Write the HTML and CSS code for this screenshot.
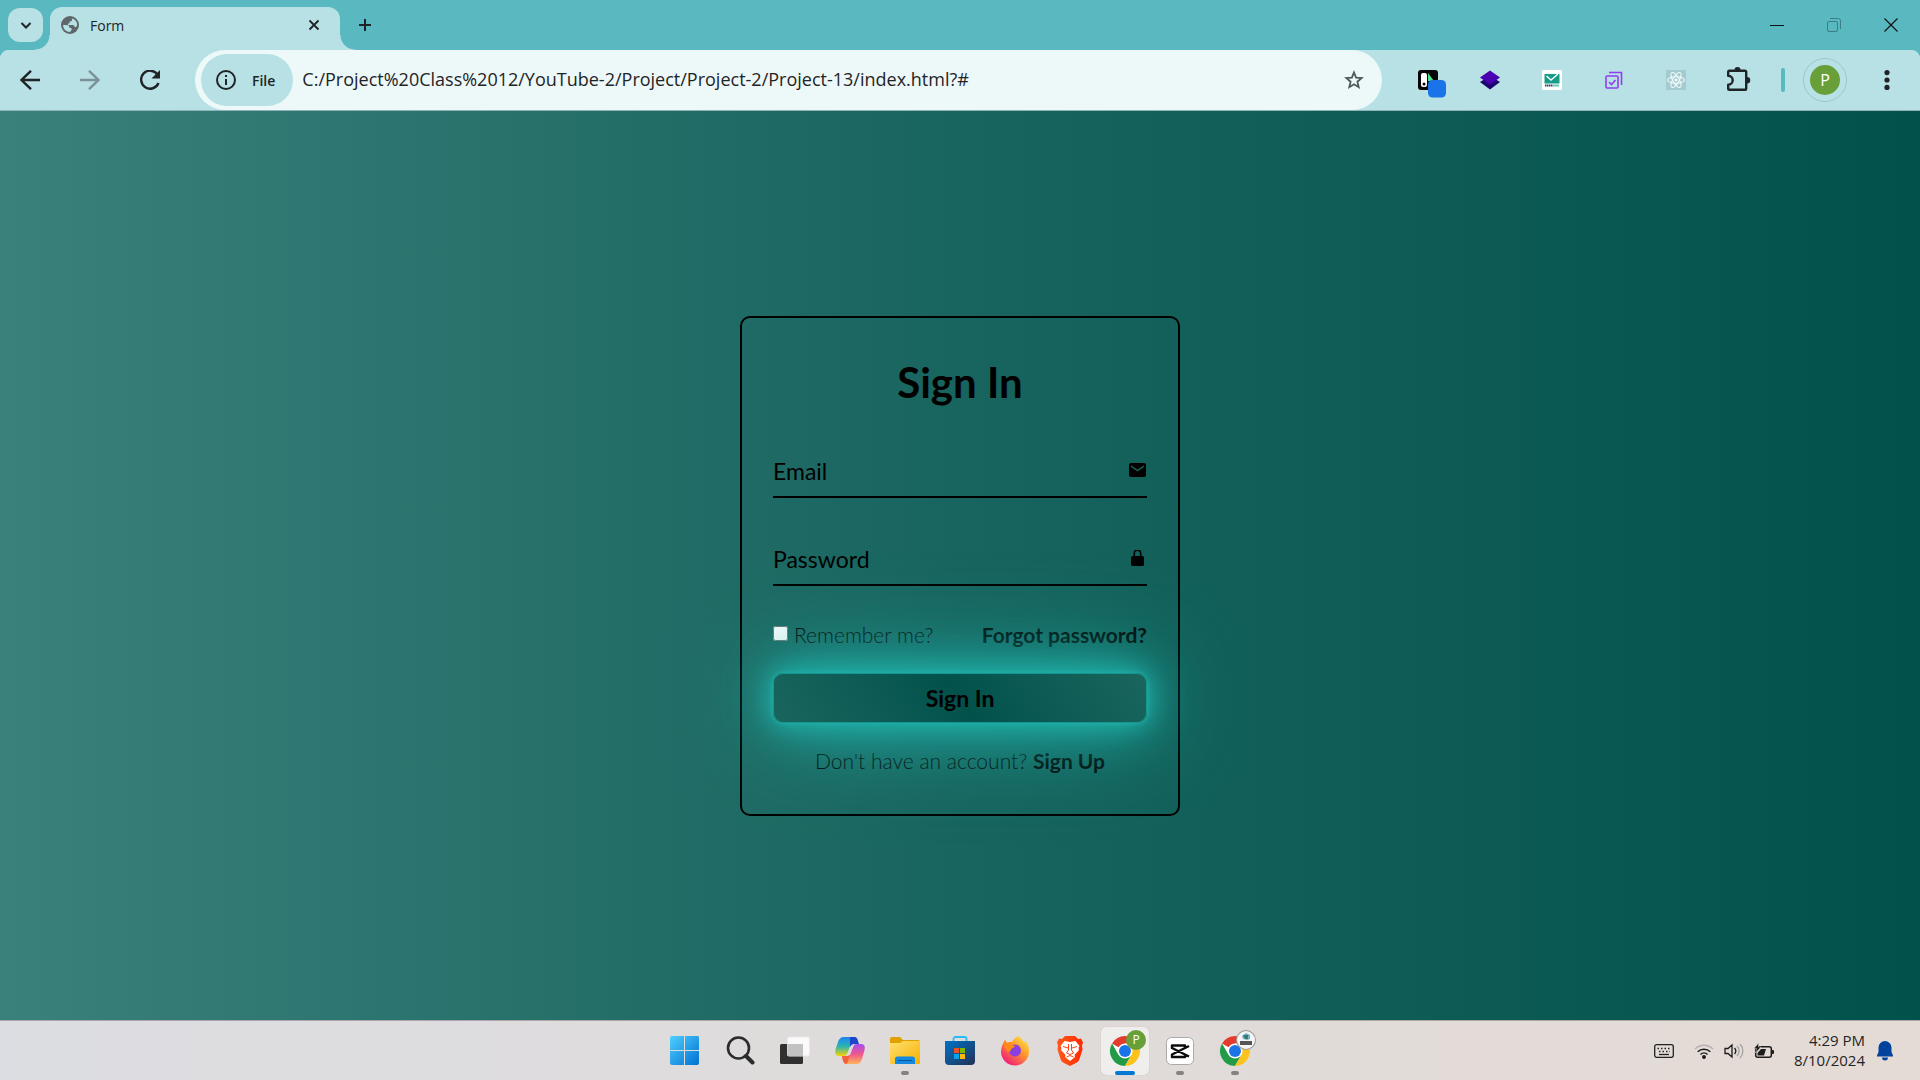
FILE: index.html
```html
<!DOCTYPE html>
<html lang="en">
<head>
    <meta charset="UTF-8">
    <meta name="viewport" content="width=device-width, initial-scale=1.0">
    <title>Form</title>
    <link rel="stylesheet" href="styles.css">
</head>
<body>
<div class="window">

    <!-- Tabs -->
    <header class="title-bar">
        <button class="tab-search" aria-label="Search tabs">
            <svg width="12" height="12" viewBox="0 0 12 12"><path d="M1.500 4L6 8.500 10.500 4" fill="none" stroke="#1f2427" stroke-width="2"/></svg>
        </button>
        <div class="tab">
            <svg width="18" height="18" viewBox="0 0 18 18">
                <circle cx="9" cy="9" r="9" fill="#5f676b"/>
                <path d="M2 9h3.500c2 0 3 1 3 3h2v2l-1.500 2A7 7 0 0 1 2 9zM11 2.500v1.500c0 1-1 1.500-2.500 1.500v2H7v1.500h5c1 0 1.500 1 1.500 2H15c1-1 1.200-2 1-3.500A7 7 0 0 0 11 2.500z" fill="#b7e1e4"/>
            </svg>
            <span class="tab-title">Form</span>
            <button class="tab-close" aria-label="Close tab">
                <svg width="12" height="12" viewBox="0 0 12 12"><path d="M1.500 1.500l9 9M10.500 1.500l-9 9" stroke="#1f2427" stroke-width="1.800"/></svg>
            </button>
        </div>
        <button class="new-tab" aria-label="New tab">
            <svg width="14" height="14" viewBox="0 0 14 14"><path d="M7 1v12M1 7h12" stroke="#1f2427" stroke-width="2"/></svg>
        </button>
        <div class="window-buttons">
            <button aria-label="Minimize"><svg width="14" height="14" viewBox="0 0 14 14"><path d="M0 7.500h14" stroke="#111"/></svg></button>
            <button aria-label="Restore"><svg width="14" height="14" viewBox="0 0 14 14" fill="none" stroke="#3d7d84"><rect x=".5" y="3.500" width="10" height="10" rx="1.500"/><path d="M3 .5h8.500a2 2 0 0 1 2 2V11"/></svg></button>
            <button aria-label="Close"><svg width="14" height="14" viewBox="0 0 14 14"><path d="M.5.5l13 13M13.500.5l-13 13" stroke="#111" stroke-width="1.200"/></svg></button>
        </div>
    </header>

    <!-- Toolbar -->
    <nav class="toolbar">
        <div class="nav-buttons">
            <button aria-label="Back"><svg width="20" height="20" viewBox="0 0 20 20"><path d="M20 10H2M11 .8L1.500 10l9.500 9.200" fill="none" stroke="#1f2427" stroke-width="2.400"/></svg></button>
            <button aria-label="Forward"><svg width="20" height="20" viewBox="0 0 20 20"><path d="M0 10h18M9 .8l9.500 9.200L9 19.200" fill="none" stroke="#7b9397" stroke-width="2.400"/></svg></button>
            <button aria-label="Reload"><svg width="20" height="20" viewBox="0 0 20 20"><path d="M17.500 4.500A9 9 0 1 0 18.500 13" fill="none" stroke="#1f2427" stroke-width="2.400"/><path d="M20 0v8.500h-8.500z" fill="#1f2427"/></svg></button>
        </div>
        <div class="address-bar">
            <button class="file-chip">
                <svg width="20" height="20" viewBox="0 0 20 20"><circle cx="10" cy="10" r="9" fill="none" stroke="#1f2427" stroke-width="2"/><path d="M10 9v6M10 5v2" stroke="#1f2427" stroke-width="2"/></svg>
                File
            </button>
            <input type="text" class="url" aria-label="Address" value="C:/Project%20Class%2012/YouTube-2/Project/Project-2/Project-13/index.html?#">
            <button class="bookmark" aria-label="Bookmark this page">
                <svg width="20" height="20" viewBox="0 0 20 20"><path d="M10 2.500l2.100 5.200 5.500.4-4.200 3.600 1.300 5.500L10 14.300l-4.700 2.900 1.300-5.500-4.200-3.600 5.500-.4z" fill="none" stroke="#4d585c" stroke-width="1.800"/></svg>
            </button>
        </div>
        <div class="extensions">
            <button aria-label="Reader extension"><svg width="36" height="36" viewBox="0 0 36 36">
                <rect x="8" y="8" width="20" height="20" rx="3" fill="#050505"/><path d="M18 11l6 8h-6z" fill="#4be08b"/><rect x="11" y="11" width="6" height="14" rx="2" fill="#fff"/><circle cx="14" cy="22" r="1.500"/>
                <rect x="18" y="18" width="18" height="17.500" rx="4.500" fill="#1a73e8"/></svg></button>
            <button aria-label="Layers extension"><svg width="20" height="20" viewBox="0 0 20 20"><path d="M0 12l10-6 10 6-10 7.500z" fill="#1c0570"/><path d="M0 7.500L10 .5l10 7-10 7z" fill="#4a00b0"/></svg></button>
            <button aria-label="Mail extension"><svg width="20" height="20" viewBox="0 0 20 20"><rect width="20" height="20" rx="1.500" fill="#fff"/><path d="M2.500 4h15v9.500h-15z" fill="#159d87"/><path d="M4.500 6l4.500 4 7-6" fill="none" stroke="#fff" stroke-width="1.400"/><path d="M3 15.500h8" stroke="#343a68" stroke-width="2" stroke-dasharray="1.500 .5"/><path d="M11 15.500h6" stroke="#5fcab6" stroke-width="2"/></svg></button>
            <button aria-label="Tasks extension"><svg width="18" height="18" viewBox="0 0 18 18" fill="none" stroke="#8f3ff0" stroke-width="1.600"><rect x="1" y="5" width="12" height="12" rx="1"/><path d="M4 1.500h12.500V14M4 11l2.500 2.500L10.500 9"/></svg></button>
            <button aria-label="React extension"><svg width="20" height="20" viewBox="0 0 20 20"><rect width="20" height="20" rx="1" fill="#a3cbd0"/><g fill="none" stroke="#f2fafa" stroke-width="1.100"><ellipse cx="10" cy="10" rx="8.500" ry="3.200"/><ellipse cx="10" cy="10" rx="8.500" ry="3.200" transform="rotate(60 10 10)"/><ellipse cx="10" cy="10" rx="8.500" ry="3.200" transform="rotate(120 10 10)"/></g><circle cx="10" cy="10" r="1.500" fill="#f2fafa"/></svg></button>
            <button aria-label="Extensions"><svg width="26" height="26" viewBox="0 0 26 26"><path d="M4.200 3.700h16a1 1 0 0 1 1 1v17a1 1 0 0 1-1 1h-16a1 1 0 0 1-1-1v-4a4.500 4.500 0 0 0 0-9v-4a1 1 0 0 1 1-1z" fill="none" stroke="#1f2427" stroke-width="2.400" stroke-linejoin="round"/><path d="M9.500 3a3 3 0 0 1 6 0zM22 10a3 3 0 0 1 0 6.500z" fill="#1f2427"/></svg></button>
        </div>
        <span class="divider"></span>
        <button class="avatar" aria-label="Profile"><span>P</span></button>
        <button class="menu" aria-label="Menu"><svg width="6" height="20" viewBox="0 0 6 20" fill="#1f2427"><circle cx="3" cy="2.600" r="2.600"/><circle cx="3" cy="10" r="2.600"/><circle cx="3" cy="17.400" r="2.600"/></svg></button>
    </nav>

    <!-- Page -->
    <main class="page">
        <form class="login">
            <h1>Sign In</h1>
            <div class="input-box">
                <label for="email">Email</label>
                <input type="email" id="email">
                <svg width="18" height="18" viewBox="0 0 18 18"><rect x="0" y="1" width="17" height="14" rx="2"/><path d="M2 4l6.500 4.500L15 4" fill="none" stroke="#17635d" stroke-width="1.500"/></svg>
            </div>
            <div class="input-box">
                <label for="password">Password</label>
                <input type="password" id="password">
                <svg width="18" height="18" viewBox="0 0 18 18"><rect x="2" y="6" width="13" height="10" rx="1.500"/><path d="M5.300 7V3.300a3.200 3.200 0 0 1 6.400 0V7" fill="none" stroke="#000" stroke-width="1.600"/></svg>
            </div>
            <div class="options">
                <div class="remember">
                    <input type="checkbox" id="remember">
                    <label for="remember">Remember me?</label>
                </div>
                <a href="#">Forgot password?</a>
            </div>
            <button class="btn">Sign In</button>
            <p class="register">Don't have an account? <a href="#">Sign Up</a></p>
        </form>
    </main>

    <!-- Taskbar -->
    <footer class="taskbar">
        <svg class="defs" width="0" height="0">
            <defs>
                <linearGradient id="win" x1="0" y1="0" x2="1" y2="1"><stop offset="0" stop-color="#4fd0ff"/><stop offset="1" stop-color="#0070d2"/></linearGradient>
                <linearGradient id="cop1" x1="0" y1="0" x2="0" y2="1"><stop offset="0" stop-color="#1a84f0"/><stop offset=".5" stop-color="#2fb5b0"/><stop offset="1" stop-color="#f8d400"/></linearGradient>
                <linearGradient id="cop2" x1="0" y1="0" x2="0" y2="1"><stop offset="0" stop-color="#a54df0"/><stop offset=".5" stop-color="#f0568f"/><stop offset="1" stop-color="#ffb45a"/></linearGradient>
                <linearGradient id="fold" x1="0" y1="0" x2="1" y2="1"><stop offset="0" stop-color="#ffe070"/><stop offset="1" stop-color="#f8b000"/></linearGradient>
                <linearGradient id="store" x1="0" y1="0" x2="1" y2="1"><stop offset="0" stop-color="#0072c6"/><stop offset="1" stop-color="#243056"/></linearGradient>
                <linearGradient id="fox" x1="1" y1="0" x2=".2" y2="1"><stop offset="0" stop-color="#fff44f"/><stop offset=".45" stop-color="#ff9a2a"/><stop offset="1" stop-color="#f01080"/></linearGradient>
                <linearGradient id="brave" x1="0" y1="0" x2="1" y2="0"><stop offset="0" stop-color="#ff5a1c"/><stop offset="1" stop-color="#ff2a00"/></linearGradient>
                <g id="chrome">
                    <circle cx="15" cy="15" r="15" fill="#fff"/>
                    <path d="M15 15L2 7.500A15 15 0 0 1 28 7.500H15z" fill="#e33b2e"/>
                    <path d="M2 7.500A15 15 0 0 0 15 30l6.500-11.300L15 15 8.500 18.700z" fill="#229b48"/>
                    <path d="M28 7.500H15L21.500 18.700 15 30A15 15 0 0 0 28 7.500z" fill="#fcc31e"/>
                    <circle cx="15" cy="15" r="7.500" fill="#fff"/><circle cx="15" cy="15" r="6" fill="#1b73e8"/>
                </g>
            </defs>
        </svg>
        <div class="apps">
            <button class="app" aria-label="Start"><svg width="30" height="30" viewBox="0 0 30 30"><path d="M2 0h12v14H0V2a2 2 0 0 1 2-2zM15 0h13a2 2 0 0 1 1 2v12H15zM0 15h14v14H2a2 2 0 0 1-2-2zM15 15h14v12a2 2 0 0 1-2 2H15z" fill="url(#win)"/></svg></button>
            <button class="app" aria-label="Search"><svg width="30" height="30" viewBox="0 0 30 30" fill="none" stroke="#2b2b2b"><circle cx="13.500" cy="12" r="10.500" stroke-width="2.600"/><path d="M21 20l6.500 6.500" stroke-width="4" stroke-linecap="round"/></svg></button>
            <button class="app" aria-label="Task view"><svg width="30" height="30" viewBox="0 0 30 30"><rect y="8" width="23" height="20" rx="1.500" fill="#303030"/><rect x="7.500" y="1" width="22" height="19" rx="1.500" fill="#fafafa" stroke="#e8e8e8"/><rect x="7.500" y="8" width="15.500" height="12" fill="#c2c2c2"/></svg></button>
            <button class="app" aria-label="Copilot"><svg width="30" height="30" viewBox="0 0 30 30"><path d="M9 1h9c3 0 4 2 4.500 5l.5 2h-4c-3 0-4 2-5 5l-1.500 4c-1 2-2 3-5 3H4c-4 0-4.500-3-3-8l2-6c1-3 2.500-5 6-5z" fill="url(#cop1)"/><path d="M15 1h4c3 0 3.500 2 4 4l1 3h-5c-2 0-3 1-4 3z" fill="#1e46c8"/><path d="M21 28h-9c-3 0-4-2-4.500-5L7 20h4c3 0 4-2 5-5l1.500-4c1-2 2-3 5-3H26c4 0 4.500 3 3 8l-2 7c-1 3-2.500 5-6 5z" fill="url(#cop2)"/><path d="M7 20h4c2 0 3-1 4-2l-2 7c-.5 2-1 3-2 3-3-1-3-4-4-8z" fill="#f4603c"/><path d="M16 10l3-1-4 10-3 1z" fill="#dedbdb"/></svg></button>
            <button class="app" aria-label="File Explorer"><svg width="30" height="30" viewBox="0 0 30 30"><path d="M0 3a2 2 0 0 1 2-2h8l3 3h15a2 2 0 0 1 2 2v4H0z" fill="#e0a000"/><path d="M0 7h10l3-2h17v22a1 1 0 0 1-1 1H1a1 1 0 0 1-1-1z" fill="url(#fold)"/><path d="M5 28v-5a2.500 2.500 0 0 1 2.500-2.500h15A2.500 2.500 0 0 1 25 23v5z" fill="#1489df"/><path d="M8 24.500h14" stroke="#0a569c"/></svg><i class="dot"></i></button>
            <button class="app" aria-label="Microsoft Store"><svg width="30" height="30" viewBox="0 0 30 30"><path d="M8.500 6V3a2 2 0 0 1 2-2h9a2 2 0 0 1 2 2v3" fill="none" stroke="#28bdf2" stroke-width="1.800"/><path d="M0 5h30v20a4 4 0 0 1-4 4H4a4 4 0 0 1-4-4z" fill="url(#store)"/><path d="M9 12h5v5H9z" fill="#f25022"/><path d="M15 12h5v5h-5z" fill="#7fba00"/><path d="M9 18h5v5H9z" fill="#00a4ef"/><path d="M15 18h5v5h-5z" fill="#ffb900"/></svg></button>
            <button class="app" aria-label="Firefox"><svg width="30" height="30" viewBox="0 0 30 30"><path d="M18 0c4 2 5 5 6 7 1-1 1-2 1-3 3 4 4 7 4 11a14 14 0 0 1-28 1C1 11 3 7 5 4l2 3c2-1 4-1 5-1 1-3 4-4 6-6z" fill="url(#fox)"/><circle cx="15" cy="14.500" r="6" fill="#8b3fe0"/><path d="M5 4l2 3c2-1 4-1 5-1l-1 3 4 1c-1 2-3 2-4 3 0 2-1 3-3 3-3-4-5-6-3-12z" fill="#ff8a16"/></svg></button>
            <button class="app" aria-label="Brave"><svg width="26" height="30" viewBox="0 0 26 30"><path d="M8 0h10l3 3 3-.5 2 4-1 3 .5 4-3 9.500c-.5 2-2 3-3.500 4L13 30l-6-3c-1.500-1-3-2-3.500-4L.5 13.500l.5-4-1-3 2-4L5 3z" fill="url(#brave)"/><path d="M7.500 5l5.500 1 5.500-1 4 5-1 2 .5 2-4.500 5 .5 2-5 4-5-4 .5-2L4 14l.5-2-1-2z" fill="#fff"/><path d="M6 10.500l5 1.500M20 10.500L15 12M11.500 8v6l-2 3 3.500 1.500 3.500-1.500-2-3V8M9.500 21l3.500-1.500 3.500 1.500" fill="none" stroke="#ff4310" stroke-width="1"/></svg></button>
            <button class="app active" aria-label="Chrome"><svg width="38" height="38" viewBox="0 0 38 38"><use href="#chrome" x="4" y="4"/></svg><span class="badge">P</span><i class="dot"></i></button>
            <button class="app" aria-label="CapCut"><svg width="28" height="28" viewBox="0 0 28 28"><rect x=".5" y=".5" width="27" height="27" rx="5" fill="#fff" stroke="#aaa"/><path d="M23 9L6 17.500v2.500h13v-3M23 19.500L6 11V8.500h13v3" fill="none" stroke="#0c0c0c" stroke-width="2.400" stroke-linejoin="round"/></svg><i class="dot"></i></button>
            <button class="app" aria-label="Chrome profile"><svg width="38" height="38" viewBox="0 0 38 38"><use href="#chrome" x="4" y="4"/></svg><span class="badge photo"><svg width="18" height="18" viewBox="0 0 18 18"><circle cx="9" cy="9" r="9" fill="#f4f4f4"/><path d="M5 5l4-3 4 2v4l-3 1-4-1z" fill="#6fb5bd"/><path d="M6 4h5v4H8z" fill="#3d777e"/><path d="M3 10h12v4H3z" fill="#555"/></svg></span><i class="dot"></i></button>
        </div>
        <div class="tray">
            <svg width="20" height="14" viewBox="0 0 20 14" fill="none" stroke="#222" stroke-width="1.300"><rect x=".7" y=".7" width="18.600" height="12.600" rx="2"/><path d="M3.500 4.500h13M5 7.500h11" stroke-dasharray="1.500 2"/><path d="M5 10.500h10"/></svg>
            <div class="status">
                <svg width="20" height="16" viewBox="0 0 20 16" fill="none" stroke="#1c1c1c" stroke-width="1.500"><path d="M1 6a12.700 12.700 0 0 1 18 0" stroke="#b5b2b1"/><path d="M3.700 8.700a9 9 0 0 1 12.600 0M6.500 11.500a5 5 0 0 1 7 0"/><circle cx="10" cy="14" r="1.200" fill="#1c1c1c"/></svg>
                <svg width="20" height="16" viewBox="0 0 20 16" fill="none" stroke="#1c1c1c" stroke-width="1.300"><path d="M1 5.500h3L8 2v12l-4-3.500H1zM10.500 5a4.500 4.500 0 0 1 0 6"/><path d="M13 3a7 7 0 0 1 0 10M16 1a10 10 0 0 1 0 14" stroke="#a5a2a1"/></svg>
                <svg width="20" height="16" viewBox="0 0 20 16"><rect x="1.700" y="3.700" width="15.600" height="10.600" rx="2" fill="none" stroke="#1c1c1c" stroke-width="1.500"/><path d="M18 7h1a1 1 0 0 1 1 1v2a1 1 0 0 1-1 1h-1zM7 6h5l-2 6.500H3.500V10z" fill="#1c1c1c"/><path d="M4.500 0L0 5.500h2.500L1.500 10 7 4H4.500z" fill="#1c1c1c" stroke="#dfdad8" stroke-width=".5"/></svg>
            </div>
            <div class="clock"><time>4:29 PM</time><time>8/10/2024</time></div>
            <svg width="16" height="20" viewBox="0 0 16 20" fill="#00429c"><path d="M8 0a6.500 6.500 0 0 1 6.500 6.500V11L16 14.500v1H0v-1L1.500 11V6.500A6.500 6.500 0 0 1 8 0zM5 16.500h6a3 3 0 0 1-6 0z"/></svg>
        </div>
    </footer>
</div>
</body>
</html>
```
FILE: styles.css
```css
*{
    margin: 0;
    padding: 0;
    box-sizing: border-box;
}
body{
    font-family: "Open Sans", "Noto Sans", sans-serif;
    color: #1f2427;
}
button{
    border: none;
    background: none;
    font-family: inherit;
    color: inherit;
    cursor: pointer;
}
svg{
    display: block;
    flex: none;
}
a{
    color: inherit;
    text-decoration: none;
}
.window{
    min-height: 100vh;
    display: flex;
    flex-direction: column;
}

/* Tabs */
.title-bar{
    display: flex;
    align-items: center;
    height: 50px;
    padding-left: 8px;
    background: #5ab8c1;
}
.tab-search{
    display: grid;
    place-items: center;
    width: 35px;
    height: 34px;
    border-radius: 12px;
    background: #b7e1e4;
}
.tab{
    position: relative;
    align-self: flex-end;
    display: flex;
    align-items: center;
    width: 290px;
    height: 43px;
    margin-left: 7px;
    padding: 0 16px 7px 11px;
    border-radius: 12px 12px 0 0;
    background: #b7e1e4;
}
.tab::before,
.tab::after{
    content: "";
    position: absolute;
    bottom: 0;
    width: 15px;
    height: 15px;
}
.tab::before{
    right: 100%;
    background: radial-gradient(circle at 0 0, transparent 14px, #b7e1e4 15px);
}
.tab::after{
    left: 100%;
    background: radial-gradient(circle at 100% 0, transparent 14px, #b7e1e4 15px);
}
.tab-title{
    flex: 1;
    margin-left: 11px;
    font-size: 14px;
}
.tab-close{
    padding: 4px;
}
.new-tab{
    padding: 11px;
    margin-left: 7px;
}
.window-buttons{
    display: flex;
    margin-left: auto;
    padding-right: 1px;
}
.window-buttons button{
    display: grid;
    place-items: center;
    width: 57px;
    height: 48px;
}

/* Toolbar */
.toolbar{
    display: flex;
    align-items: center;
    height: 61px;
    padding: 0 13px 0 10px;
    border-bottom: 1px solid #8fb3b6;
    background: radial-gradient(circle at 10px 10px, #b7e1e4 10px, #5ab8c1 11px) 0 0 / 10px 10px no-repeat,
                radial-gradient(circle at 0 10px, #b7e1e4 10px, #5ab8c1 11px) 100% 0 / 10px 10px no-repeat,
                #b7e1e4;
}
.nav-buttons{
    display: flex;
    gap: 20px;
}
.nav-buttons button,
.extensions button,
.menu{
    display: grid;
    place-items: center;
    width: 40px;
    height: 40px;
}
.address-bar{
    flex: 1;
    display: flex;
    align-items: center;
    height: 60px;
    margin: 0 26px 0 25px;
    padding: 0 18px 0 6px;
    border-radius: 30px;
    background: #edf8f8;
}
.file-chip{
    display: flex;
    align-items: center;
    gap: 16px;
    height: 52px;
    padding: 0 18px 0 15px;
    border-radius: 26px;
    background: #b7e1e4;
    font-size: 14px;
    font-weight: 600;
}
.url{
    flex: 1;
    min-width: 0;
    margin-left: 9px;
    padding-bottom: 2px;
    border: none;
    outline: none;
    background: none;
    font-family: inherit;
    font-size: 18px;
    color: #1f2427;
}
.extensions{
    display: flex;
    gap: 22px;
}
.divider{
    width: 4px;
    height: 24px;
    margin: 0 18px 0 23px;
    border-radius: 2px;
    background: #5ab8c1;
}
.avatar{
    display: grid;
    place-items: center;
    width: 44px;
    height: 44px;
    margin-right: 20px;
    border: 1px solid #9cc6cb;
    border-radius: 50%;
}
.avatar span{
    width: 30px;
    border-radius: 50%;
    background: #689f38;
    color: #fff;
    font-size: 16px;
    line-height: 30px;
}

/* Page */
.page{
    flex: 1;
    display: grid;
    place-items: center;
    background: linear-gradient(to right, #3a807b, #18645e 50%, #02524b);
    font-family: Lato, "Noto Sans", sans-serif;
    color: #000;
}
.login{
    width: 440px;
    padding: 40px 31px;
    border: 2px solid #000;
    border-radius: 10px;
}
.login h1{
    margin-bottom: 36px;
    font-size: 42px;
    line-height: 48px;
    text-align: center;
}
.input-box{
    display: flex;
    align-items: center;
    height: 56px;
    margin-bottom: 32px;
    padding-top: 4px;
    border-bottom: 2px solid #000;
    font-size: 23px;
}
.input-box input{
    flex: 1;
    min-width: 0;
    border: none;
    outline: none;
    background: none;
    font: inherit;
}
.options{
    display: flex;
    justify-content: space-between;
    margin: 36px 0 25px;
    font-size: 21px;
    line-height: 26px;
}
.remember{
    display: flex;
    gap: 6px;
}
.remember input{
    width: 15px;
    height: 15px;
    margin-top: 4px;
}
.remember label,
.register{
    font-weight: 300;
}
.login a{
    font-weight: 700;
}
.btn{
    position: relative;
    display: block;
    width: 100%;
    height: 50px;
    border: 1px solid #16968f;
    border-radius: 10px;
    background: linear-gradient(56deg, #1a665f, #02524b 50%, #1a665f);
    box-shadow: 0 0 5px #20b2aa, 0 0 25px #20b2aa, 0 0 50px #20b2aa, 0 0 100px #20b2aa;
    font-size: 23px;
    font-weight: 700;
}
.register{
    margin-top: 25px;
    font-size: 21px;
    line-height: 26px;
    text-align: center;
}

/* Taskbar */
.taskbar{
    display: grid;
    grid-template-columns: 1fr auto 1fr;
    align-items: center;
    height: 60px;
    border-top: 1px solid #a9a7a7;
    background: linear-gradient(to right, #dcdde2, #dfdbda 50%, #e5dbd5);
}
.defs{
    position: absolute;
}
.apps{
    grid-column: 2;
    display: flex;
    gap: 7px;
}
.app{
    position: relative;
    display: grid;
    place-items: center;
    width: 48px;
    height: 48px;
    border-radius: 5px;
}
.app.active{
    background: #f0eeed;
    box-shadow: 0 0 1px #aaa;
}
.dot{
    position: absolute;
    bottom: 0;
    left: 20px;
    width: 8px;
    height: 4px;
    border-radius: 2px;
    background: #858382;
}
.active .dot{
    left: 14px;
    width: 20px;
    background: #0078d4;
}
.badge{
    position: absolute;
    top: 3px;
    right: 3px;
    width: 20px;
    height: 20px;
    border-radius: 50%;
    background: #689f38;
    color: #fff;
    font-size: 12px;
    line-height: 20px;
}
.photo{
    padding: 1px;
    background: #999;
}
.tray{
    display: flex;
    align-items: center;
    justify-content: flex-end;
    padding-right: 27px;
}
.status{
    display: flex;
    gap: 10px;
    margin: 0 20px;
}
.clock{
    margin-right: 12px;
    padding-bottom: 2px;
    font-size: 15px;
    line-height: 20px;
    text-align: right;
}
.clock time{
    display: block;
}
```
